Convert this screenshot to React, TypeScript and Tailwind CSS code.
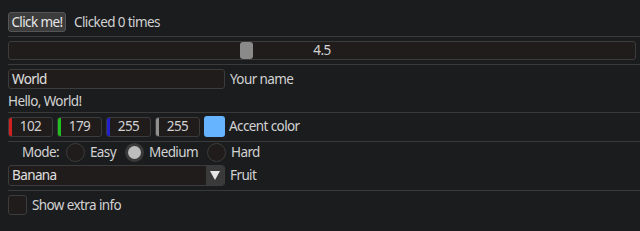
import React from "react";

const font = { fontFamily: '"Noto Sans", "Open Sans", sans-serif' };

function Sep() {
  return <div className="h-px bg-[#3a3a3a] ml-2" />;
}

function NumField({ value, edge }: { value: string; edge: string }) {
  return (
    <div className="relative w-[45px] h-[20px] rounded-[3px] border border-[#3c3c3c] bg-[#201c1c] flex items-center justify-center overflow-hidden">
      <div className={`absolute left-0 top-0 bottom-0 w-[3px] ${edge}`} />
      <span className="pt-px">{value}</span>
    </div>
  );
}

function Radio({ label, checked }: { label: string; checked?: boolean }) {
  return (
    <div className="flex items-center gap-[5px]">
      {checked ? (
        <div className="w-[19px] h-[19px] rounded-full bg-[#3a3a3a] flex items-center justify-center">
          <div className="w-[13px] h-[13px] rounded-full bg-[#bdbdbd]" />
        </div>
      ) : (
        <div className="w-[19px] h-[19px] rounded-full border border-[#3c3c3c] bg-[#201c1c]" />
      )}
      <span className="pt-px">{label}</span>
    </div>
  );
}

export default function App() {
  return (
    <div
      className="w-[640px] h-[231px] bg-[#1b1c1e] text-[#d2d2d2] text-[13.5px] tracking-[-0.6px] leading-none overflow-hidden"
      style={font}
    >
      <div className="flex items-center gap-[8px] pl-2 pt-[12px] h-[32px]">
        <div className="h-[20px] w-[58px] rounded-[3px] border border-[#555] bg-[#3c3c3c] text-[#e8e8e8] flex items-center justify-center pt-px">
          Click me!
        </div>
        <span className="pt-px">Clicked 0 times</span>
      </div>
      <div className="h-[4px]" />
      <Sep />
      <div className="pl-2 pt-[4px]">
        <div className="relative w-[628px] h-[19px] rounded-[3px] border border-[#3c3c3c] bg-[#201c1c] flex items-center justify-center">
          <div className="absolute left-[231px] top-[0px] w-[13px] h-[17px] rounded-[3px] bg-[#8a8a8a]" />
          <span className="pt-px">4.5</span>
        </div>
      </div>
      <div className="h-[4px]" />
      <Sep />
      <div className="flex items-center gap-[5px] pl-2 pt-[4px]">
        <div className="w-[217px] h-[20px] rounded-[3px] border border-[#3c3c3c] bg-[#201c1c] flex items-center px-[3px] pt-px text-[#e0e0e0]">
          World
        </div>
        <span className="pt-px">Your name</span>
      </div>
      <div className="pl-2 h-[23px] flex items-center pt-[2px]">Hello, World!</div>
      <Sep />
      <div className="flex items-center gap-[4px] pl-2 pt-[3px]">
        <NumField value="102" edge="bg-[#d02020]" />
        <NumField value="179" edge="bg-[#20c020]" />
        <NumField value="255" edge="bg-[#2020d0]" />
        <NumField value="255" edge="bg-[#909090]" />
        <div className="w-[21px] h-[21px] rounded-[3px] bg-[#66b3ff]" />
        <span className="pt-px">Accent color</span>
      </div>
      <div className="h-[4px]" />
      <Sep />
      <div className="flex items-center pl-[22px] h-[21px] gap-[7px]">
        <span>Mode:</span>
        <div className="flex items-center gap-[9px]">
          <Radio label="Easy" />
          <Radio label="Medium" checked />
          <Radio label="Hard" />
        </div>
      </div>
      <div className="flex items-center gap-[5px] pl-2 pt-[2px]">
        <div className="w-[217px] h-[21px] rounded-[3px] border border-[#3c3c3c] bg-[#201c1c] flex items-center overflow-hidden text-[#e0e0e0]">
          <span className="flex-1 px-[3px] pt-px">Banana</span>
          <div className="w-[18px] h-full bg-[#3a3a3a] flex items-center justify-center">
            <svg width="10" height="9" viewBox="0 0 10 9">
              <path d="M0 0 L10 0 L5 9 Z" fill="#e6e6e6" />
            </svg>
          </div>
        </div>
        <span className="pt-px">Fruit</span>
      </div>
      <div className="h-[4px]" />
      <Sep />
      <div className="flex items-center gap-[5px] pl-2 pt-[4px]">
        <div className="w-[19px] h-[20px] rounded-[3px] border border-[#3c3c3c] bg-[#201c1c]" />
        <span className="pt-px">Show extra info</span>
      </div>
    </div>
  );
}
